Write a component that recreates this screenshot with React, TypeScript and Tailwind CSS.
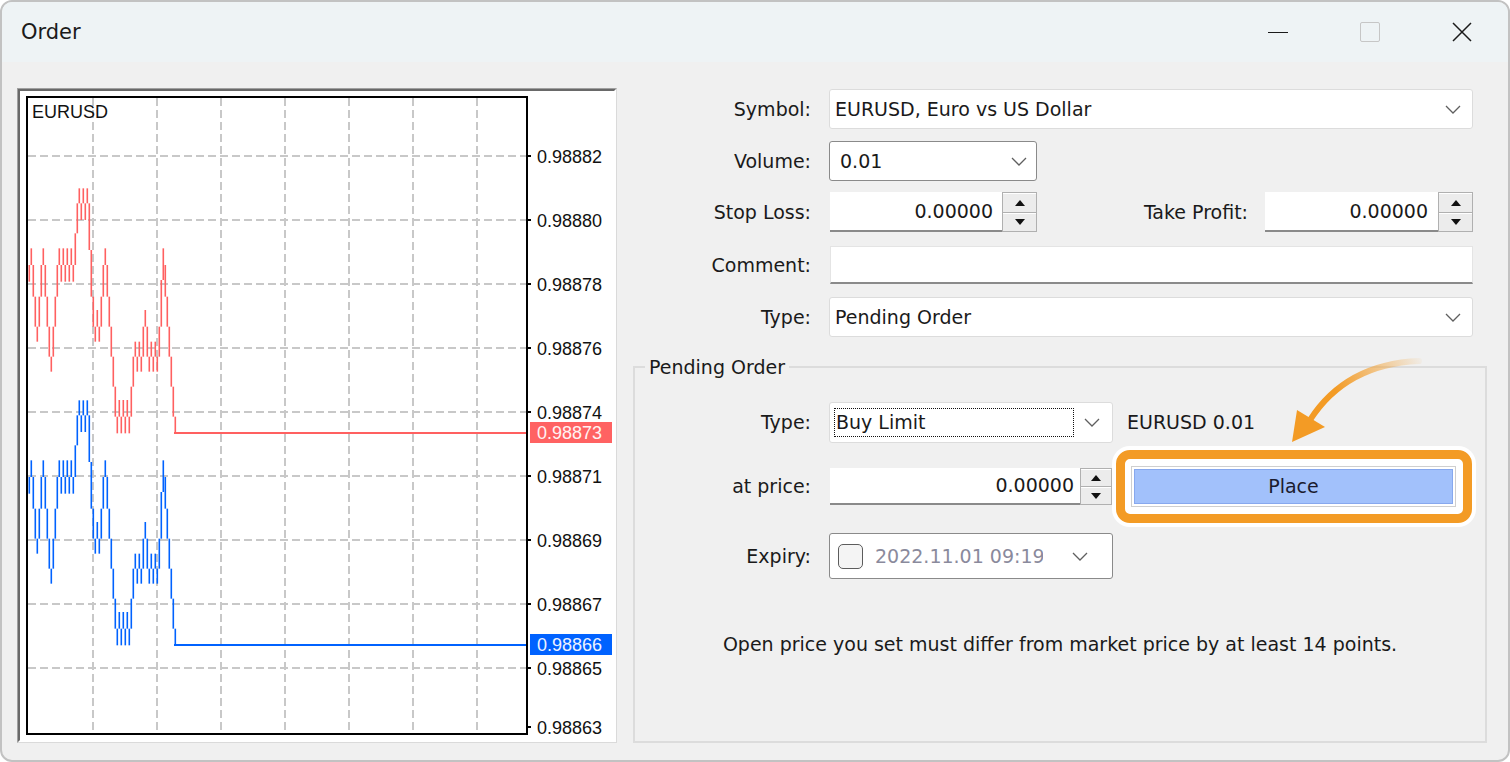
import React from "react"

// tick columns of the bid line, y given in chart units (screen y = 180 + v / 3)
const TICKS: [number, number][] = [
  [255, 305], [205, 255], [255, 350], [350, 440], [440, 485], [350, 440], [255, 350], [205, 255],
  [255, 350], [350, 440], [440, 530], [530, 575], [440, 530], [350, 440], [255, 350], [205, 255],
  [255, 305], [205, 255], [255, 305], [205, 255], [255, 305], [205, 255], [255, 305], [160, 255],
  [70, 160], [25, 70], [70, 120], [25, 70], [70, 120], [25, 70], [70, 210], [210, 350],
  [350, 440], [440, 485], [390, 440], [440, 485], [350, 440], [255, 350], [205, 255], [255, 350],
  [350, 440], [440, 530], [530, 620], [620, 710], [710, 760], [660, 710], [710, 760], [660, 710],
  [710, 760], [660, 710], [710, 760], [620, 710], [530, 620], [485, 530], [530, 575], [485, 530],
  [530, 575], [440, 530], [390, 440], [440, 530], [530, 575], [485, 530], [530, 575], [485, 530],
  [530, 575], [440, 530], [300, 440], [205, 300], [255, 350], [350, 440], [440, 530], [530, 620],
  [620, 710], [710, 760],
]

const PRICES: [string, number][] = [
  ["0.98882", 156], ["0.98880", 220], ["0.98878", 284], ["0.98876", 348], ["0.98874", 412],
  ["0.98871", 476], ["0.98869", 540], ["0.98867", 604], ["0.98865", 668], ["0.98863", 727],
]

const GRID_X = [93, 157, 221, 285, 349, 413, 477]
const GRID_Y = [156, 220, 284, 348, 412, 476, 540, 604, 668]

function Chart() {
  const font = "'Liberation Sans', Arial, sans-serif"
  return (
    <svg width="594" height="649" viewBox="20 91 594 649" className="block">
      <rect x="20" y="91" width="594" height="649" fill="#ffffff" />
      {GRID_X.map((x) => (
        <line key={"gx" + x} x1={x} y1={98} x2={x} y2={733} stroke="#c8c8c8" strokeWidth="2" strokeDasharray="8 4" />
      ))}
      {GRID_Y.map((y) => (
        <line key={"gy" + y} x1={28} y1={y} x2={526} y2={y} stroke="#c8c8c8" strokeWidth="2" strokeDasharray="8 4" />
      ))}
      {TICKS.map(([a, b], i) => (
        <rect key={"r" + i} x={28.5 + 2 * i} y={180 + a / 3} width={1.6} height={(b - a) / 3} fill="#ff6060" />
      ))}
      {TICKS.map(([a, b], i) => (
        <rect key={"b" + i} x={28.5 + 2 * i} y={392 + a / 3} width={1.6} height={(b - a) / 3} fill="#0062ff" />
      ))}
      <rect x="174" y="432" width="353" height="2" fill="#ff6060" />
      <rect x="174" y="644" width="353" height="2" fill="#0062ff" />
      <rect x="27" y="97" width="500" height="637" fill="none" stroke="#000000" strokeWidth="2" />
      <text x="32" y="118" fontFamily={font} fontSize="18" fill="#111111">EURUSD</text>
      {PRICES.map(([p, y]) => (
        <g key={p}>
          <rect x="528" y={y - 1} width="3" height="2" fill="#000000" />
          <text x="537" y={y + 6.5} fontFamily={font} fontSize="18" fill="#111111">{p}</text>
        </g>
      ))}
      <rect x="530" y="422" width="82" height="21" fill="#ff6262" />
      <text x="537" y="439" fontFamily={font} fontSize="18" fill="#fff2f2">0.98873</text>
      <rect x="530" y="634" width="82" height="21" fill="#0062ff" />
      <text x="537" y="651" fontFamily={font} fontSize="18" fill="#eef2ff">0.98866</text>
    </svg>
  )
}

function Chevron({ className = "" }: { className?: string }) {
  return (
    <svg width="16" height="9" viewBox="0 0 16 9" className={className}>
      <polyline points="1,1 8,8 15,1" fill="none" stroke="#5f5f5f" strokeWidth="1.3" />
    </svg>
  )
}

function Spinner({ className = "" }: { className?: string }) {
  return (
    <div className={`flex flex-col border border-[#b0b0b0] bg-[#ececec] ${className}`}>
      <div className="flex-1 flex items-center justify-center border-b border-[#b0b0b0] border-t border-t-white">
        <svg width="10" height="6" viewBox="0 0 10 6">
          <polygon points="0,6 5,0 10,6" fill="#111111" />
        </svg>
      </div>
      <div className="flex-1 flex items-center justify-center border-t border-white">
        <svg width="10" height="6" viewBox="0 0 10 6">
          <polygon points="0,0 10,0 5,6" fill="#111111" />
        </svg>
      </div>
    </div>
  )
}

function Label({ text, w = "w-[178px]" }: { text: string; w?: string }) {
  return <div className={`${w} shrink-0 text-right`}>{text}</div>
}

export default function App() {
  return (
    <div className="w-[1510px] h-[762px] bg-white font-['DejaVu_Sans',Verdana,sans-serif] text-[#1a1a1a]">
      <div className="h-full flex flex-col overflow-hidden rounded-[12px] border-2 border-[#c2c2c2] bg-[#f0f0f0]">
        {/* title bar */}
        <div className="h-[60px] shrink-0 flex items-center bg-[#eef3f5]">
          <span className="pl-[19px] pt-[2px] text-[21px]">Order</span>
          <div className="ml-auto flex h-full">
            <div className="w-[92px] flex items-center justify-center">
              <div className="w-[20px] h-px bg-[#1a1a1a]" />
            </div>
            <div className="w-[92px] flex items-center justify-center">
              <div className="w-[20px] h-[20px] rounded-[2px] border border-[#c6c6c6]" />
            </div>
            <div className="w-[92px] flex items-center justify-center">
              <svg width="20" height="20" viewBox="0 0 20 20">
                <path d="M1 1 L19 19 M19 1 L1 19" stroke="#1a1a1a" strokeWidth="1.5" />
              </svg>
            </div>
          </div>
        </div>

        <div className="flex-1 flex pt-[26px] pl-[15px] pb-[18px]">
          {/* chart */}
          <div className="w-[600px] h-[655px] shrink-0 border border-t-[#a0a0a0] border-l-[#a0a0a0] border-r-[#dadada] border-b-[#dadada]">
            <div className="h-full border-2 border-t-[#696969] border-l-[#696969] border-r-white border-b-white bg-white">
              <Chart />
            </div>
          </div>

          {/* form */}
          <div className="flex-1 flex flex-col pl-[16px] pr-[21px] text-[19px]">
            <div className="pr-[14px] mt-[1px]">
              <div className="h-[40px] flex items-center">
                <Label text="Symbol:" />
                <div className="ml-[18px] flex-1 h-full flex items-center bg-white rounded-[3px] border border-[#dcdcdc]">
                  <span className="pl-[5px]">EURUSD, Euro vs US Dollar</span>
                  <Chevron className="ml-auto mr-[11px]" />
                </div>
              </div>

              <div className="mt-[12px] h-[40px] flex items-center">
                <Label text="Volume:" />
                <div className="ml-[18px] w-[208px] h-full flex items-center bg-white rounded-[3px] border border-[#8a8a8a]">
                  <span className="pl-[10px]">0.01</span>
                  <Chevron className="ml-auto mr-[9px]" />
                </div>
              </div>

              <div className="mt-[11px] h-[40px] flex items-center">
                <Label text="Stop Loss:" />
                <div className="ml-[18px] w-[208px] h-full flex">
                  <div className="flex-1 ml-px bg-white border-b-2 border-[#8a8a8a] flex items-center justify-end pr-[9px]">0.00000</div>
                  <Spinner className="w-[35px]" />
                </div>
                <div className="flex-1 text-right">Take Profit:</div>
                <div className="ml-[17px] w-[208px] h-full flex">
                  <div className="flex-1 bg-white border-b-2 border-[#8a8a8a] flex items-center justify-end pr-[10px]">0.00000</div>
                  <Spinner className="w-[35px]" />
                </div>
              </div>

              <div className="mt-[14px] h-[38px] flex items-center">
                <Label text="Comment:" />
                <div className="ml-[19px] flex-1 h-full bg-white border border-[#e4e4e4] border-b-2 border-b-[#8a8a8a]" />
              </div>

              <div className="mt-[13px] h-[40px] flex items-center">
                <Label text="Type:" />
                <div className="ml-[18px] flex-1 h-full flex items-center bg-white rounded-[3px] border border-[#dcdcdc]">
                  <span className="pl-[5px]">Pending Order</span>
                  <Chevron className="ml-auto mr-[11px]" />
                </div>
              </div>
            </div>

            <fieldset className="flex-1 mt-[18px] min-w-0 border-2 border-[#dcdcdc]">
              <legend className="ml-[10px] px-[4px] leading-[24px]">Pending Order</legend>

              <div className="mt-[23px] h-[41px] flex items-center">
                <Label text="Type:" w="w-[176px]" />
                <div className="ml-[18px] w-[284px] h-full flex items-center bg-white rounded-[3px] border border-[#dcdcdc]">
                  <div className="ml-[4px] w-[240px] h-[29px] flex items-center pl-[1px] border border-dotted border-[#111111]">Buy Limit</div>
                  <Chevron className="ml-auto mr-[12px]" />
                </div>
                <span className="ml-[14px]">EURUSD 0.01</span>
              </div>

              <div className="mt-[23px] h-[41px] flex items-center">
                <Label text="at price:" w="w-[176px]" />
                <div className="ml-[18px] w-[283px] h-[37px] flex">
                  <div className="flex-1 ml-px bg-white border-b-2 border-[#8a8a8a] flex items-center justify-end pr-[6px]">0.00000</div>
                  <Spinner className="w-[32px]" />
                </div>
                <div className="relative ml-[19px]">
                  <div className="absolute -left-[15px] -right-[16px] -top-[16px] -bottom-[16px] rounded-[14px] border-[9px] border-[#f39b25] bg-white shadow-[0_0_0_4px_#ffffff]" />
                  <svg width="150" height="90" viewBox="1280 354 150 90" className="absolute left-[150px] -top-[112px]">
                    <defs>
                      <linearGradient id="tail" gradientUnits="userSpaceOnUse" x1="1420" y1="360" x2="1335" y2="392">
                        <stop offset="0" stopColor="#f39b25" stopOpacity="0.05" />
                        <stop offset="1" stopColor="#f39b25" stopOpacity="1" />
                      </linearGradient>
                    </defs>
                    <path d="M1418 361 Q1345 364 1309 420" fill="none" stroke="url(#tail)" strokeWidth="6" strokeLinecap="round" />
                    <polygon points="1291,442 1296,410 1324,427" fill="#f39b25" />
                  </svg>
                  <div className="relative w-[325px] h-[41px] border border-[#cfcfcf] p-[2px] bg-white">
                    <div className="h-full flex items-center justify-center bg-[#a2c1fb] border border-[#87a8ee] text-[#1b1b2e]">Place</div>
                  </div>
                </div>
              </div>

              <div className="mt-[26px] h-[46px] flex items-center">
                <Label text="Expiry:" w="w-[176px]" />
                <div className="ml-[18px] w-[284px] h-full flex items-center bg-white rounded-[3px] border border-[#8a8a8a]">
                  <div className="ml-[8px] w-[25px] h-[25px] shrink-0 rounded-[5px] border-[1.5px] border-[#5c5c5c] bg-[#f4f4f4]" />
                  <div className="ml-[12px] w-[168px] shrink-0 overflow-hidden whitespace-nowrap text-[#8a8a9c]">2022.11.01 09:19</div>
                  <Chevron className="ml-auto mr-[24px]" />
                </div>
              </div>

              <div className="mt-[53px] text-center leading-[24px]">
                Open price you set must differ from market price by at least 14 points.
              </div>
            </fieldset>
          </div>
        </div>
      </div>
    </div>
  )
}
